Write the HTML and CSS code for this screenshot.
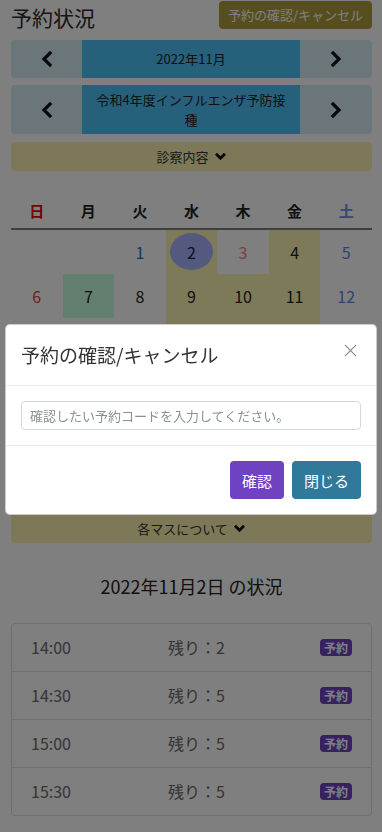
FILE: index.html
```html
<!DOCTYPE html>
<html lang="ja">
<head>
<meta charset="utf-8">
<title>予約状況</title>
<link rel="stylesheet" href="styles.css">
</head>
<body>
<div class="page">
  <div class="topbar">
    <h1 class="title">予約状況</h1>
    <button class="btn-check">予約の確認/キャンセル</button>
  </div>

  <div class="navrow">
    <div class="side"><svg class="chev" viewBox="0 0 12 16"><path d="M9 2 L3 8 L9 14" /></svg></div>
    <div class="mid">2022年11月</div>
    <div class="side"><svg class="chev" viewBox="0 0 12 16"><path d="M3 2 L9 8 L3 14" /></svg></div>
  </div>

  <div class="navrow navrow-2">
    <div class="side"><svg class="chev" viewBox="0 0 12 16"><path d="M9 2 L3 8 L9 14" /></svg></div>
    <div class="mid">令和4年度インフルエンザ予防接種</div>
    <div class="side"><svg class="chev" viewBox="0 0 12 16"><path d="M3 2 L9 8 L3 14" /></svg></div>
  </div>

  <div class="toggle">診察内容 <svg class="down" viewBox="0 0 14 10"><path d="M2 2 L7 7 L12 2" /></svg></div>

  <table class="cal">
    <thead>
      <tr><th class="sun">日</th><th>月</th><th>火</th><th>水</th><th>木</th><th>金</th><th class="sat">土</th></tr>
    </thead>
    <tbody>
      <tr><td></td><td></td><td class="c-blue">1</td><td class="y"><span class="today">2</span></td><td class="c-holiday">3</td><td class="y">4</td><td class="c-sat">5</td></tr>
      <tr><td class="c-sun">6</td><td class="g">7</td><td>8</td><td class="y">9</td><td class="y">10</td><td class="y">11</td><td class="c-sat">12</td></tr>
      <tr><td class="c-sun">13</td><td>14</td><td>15</td><td class="y">16</td><td class="y">17</td><td class="y">18</td><td class="c-sat">19</td></tr>
      <tr><td class="c-sun">20</td><td>21</td><td>22</td><td class="y">23</td><td class="y">24</td><td class="y">25</td><td class="c-sat">26</td></tr>
      <tr><td class="c-sun">27</td><td>28</td><td>29</td><td class="y">30</td><td></td><td></td><td></td></tr>
    </tbody>
  </table>

  <div class="toggle toggle-2">各マスについて <svg class="down" viewBox="0 0 14 10"><path d="M2 2 L7 7 L12 2" /></svg></div>

  <h2 class="day-title">2022年11月2日 の状況</h2>

  <ul class="slots">
    <li class="slot"><span>14:00</span><span>残り：2</span><span class="badge">予約</span></li>
    <li class="slot"><span>14:30</span><span>残り：5</span><span class="badge">予約</span></li>
    <li class="slot"><span>15:00</span><span>残り：5</span><span class="badge">予約</span></li>
    <li class="slot"><span>15:30</span><span>残り：5</span><span class="badge">予約</span></li>
  </ul>
</div>

<div class="backdrop">
  <div class="modal">
    <div class="modal-header">
      <h5 class="modal-title">予約の確認/キャンセル</h5>
      <svg class="close" viewBox="0 0 14 14"><path d="M1 1 L13 13 M13 1 L1 13" /></svg>
    </div>
    <div class="modal-body">
      <input class="code" type="text" placeholder="確認したい予約コードを入力してください。">
    </div>
    <div class="modal-footer">
      <button class="btn btn-purple">確認</button>
      <button class="btn btn-teal">閉じる</button>
    </div>
  </div>
</div>
</body>
</html>
```

FILE: styles.css
```css
* { box-sizing: border-box; }
html, body { margin: 0; padding: 0; }
body {
  font-family: "Noto Sans CJK JP", "Noto Sans", sans-serif;
  color: #222;
  background: #fff;
}
.page { padding: 1px 10px 20px 11px; }

.topbar { display: flex; justify-content: space-between; align-items: flex-start; height: 28px; }
.title {
  margin: 0; padding-top: 4px;
  font-size: 21px; font-weight: 400; line-height: 24px; color: #2a2a2a;
}
.btn-check {
  height: 28px; padding: 0 9px; border: 0; border-radius: 4px;
  background: #ac9d3e; color: #fff;
  font-family: inherit; font-size: 13px; line-height: 28px;
}

.navrow {
  margin-top: 11px;
  display: grid; grid-template-columns: 71px 1fr 72px;
  min-height: 38px; border-radius: 4px; overflow: hidden;
}
.navrow-2 { margin-top: 7px; }
.side { background: #d6ecf6; display: flex; align-items: center; justify-content: center; }
.mid {
  background: #4cc1f6; display: flex; align-items: center; justify-content: center;
  text-align: center; padding: 5px 10px; font-size: 13px; line-height: 19.5px; color: #222;
}
.chev { width: 12px; height: 16px; fill: none; stroke: #111; stroke-width: 3.2; stroke-linecap: square; }

.toggle {
  margin-top: 8px; height: 29px; border-radius: 4px; background: #f9f1b0;
  display: flex; align-items: center; justify-content: center; gap: 5px;
  font-size: 13px; color: #333;
}
.down { width: 13px; height: 9px; fill: none; stroke: #111; stroke-width: 3.2; }
.toggle-2 { margin-top: 62px; }

.cal { width: 100%; margin-top: 22px; border-collapse: collapse; table-layout: fixed; }
.cal th {
  height: 36px; font-size: 15px; font-weight: 700; color: #222;
  border-bottom: 2px solid #7e7e7e; text-align: center; padding: 0;
}
.cal th.sun { color: #e00; }
.cal th.sat { color: #6a8cf0; }
.cal td { height: 44.5px; text-align: center; font-size: 16px; padding: 0; color: #222; }
.cal td.y { background: #fbf5b4; }
.cal td.g { background: #c6ffde; }
.c-blue { color: #2a6fa8 !important; }
.c-holiday { color: #f08080 !important; }
.c-sun { color: #e23a3a !important; }
.c-sat { color: #5f86e6 !important; }
.today {
  display: inline-flex; width: 43px; height: 37px; border-radius: 50%;
  background: #a9b3ff; align-items: center; justify-content: center; color: #1c2040;
}

.day-title {
  margin: 30px 0 0; text-align: center; font-size: 18px; font-weight: 400; line-height: 27px; color: #222;
}
.slots {
  list-style: none; margin: 23px 0 0; padding: 0;
  border: 1px solid #ddd; border-radius: 4px;
}
.slot {
  display: grid; grid-template-columns: 137px 1fr auto; align-items: center;
  padding: 11.5px 19px; line-height: 24px; font-size: 16px; color: #6a6a6a;
  border-top: 1px solid #ddd;
}
.slot:first-child { border-top: 0; }
.badge {
  background: #6f42c1; color: #fff; font-size: 12px; font-weight: 700;
  line-height: 13px; padding: 2px 4px; border-radius: 4px;
}

.backdrop { position: fixed; inset: 0; background: rgba(0, 0, 0, 0.5); }
.modal {
  margin: 324px 5px 0; background: #fff; border: 1px solid rgba(0,0,0,.2); border-radius: 5px;
}
.modal-header {
  display: flex; justify-content: space-between; align-items: center;
  padding: 15px; border-bottom: 1px solid #e9ecef;
}
.modal-title { margin: 0; font-size: 19px; font-weight: 400; line-height: 30px; color: #333; }
.close { width: 13px; height: 13px; stroke: #8a8a8a; stroke-width: 1.3; margin-right: 4px; margin-top: -10px; }
.modal-body { padding: 15px; border-bottom: 1px solid #e9ecef; }
.code {
  display: block; width: 100%; height: 29px; padding: 0 8px;
  border: 1px solid #d3d8de; border-radius: 4px;
  font-family: inherit; font-size: 13px; color: #333;
}
.code::placeholder { color: #8b8f94; }
.modal-footer { display: flex; justify-content: flex-end; gap: 8px; padding: 15px; }
.btn {
  height: 38px; padding: 0 12px; border: 0; border-radius: 4px;
  font-family: inherit; font-size: 15px; color: #fff;
}
.btn-purple { background: #6f42c1; }
.btn-teal { background: #31799a; }
```
